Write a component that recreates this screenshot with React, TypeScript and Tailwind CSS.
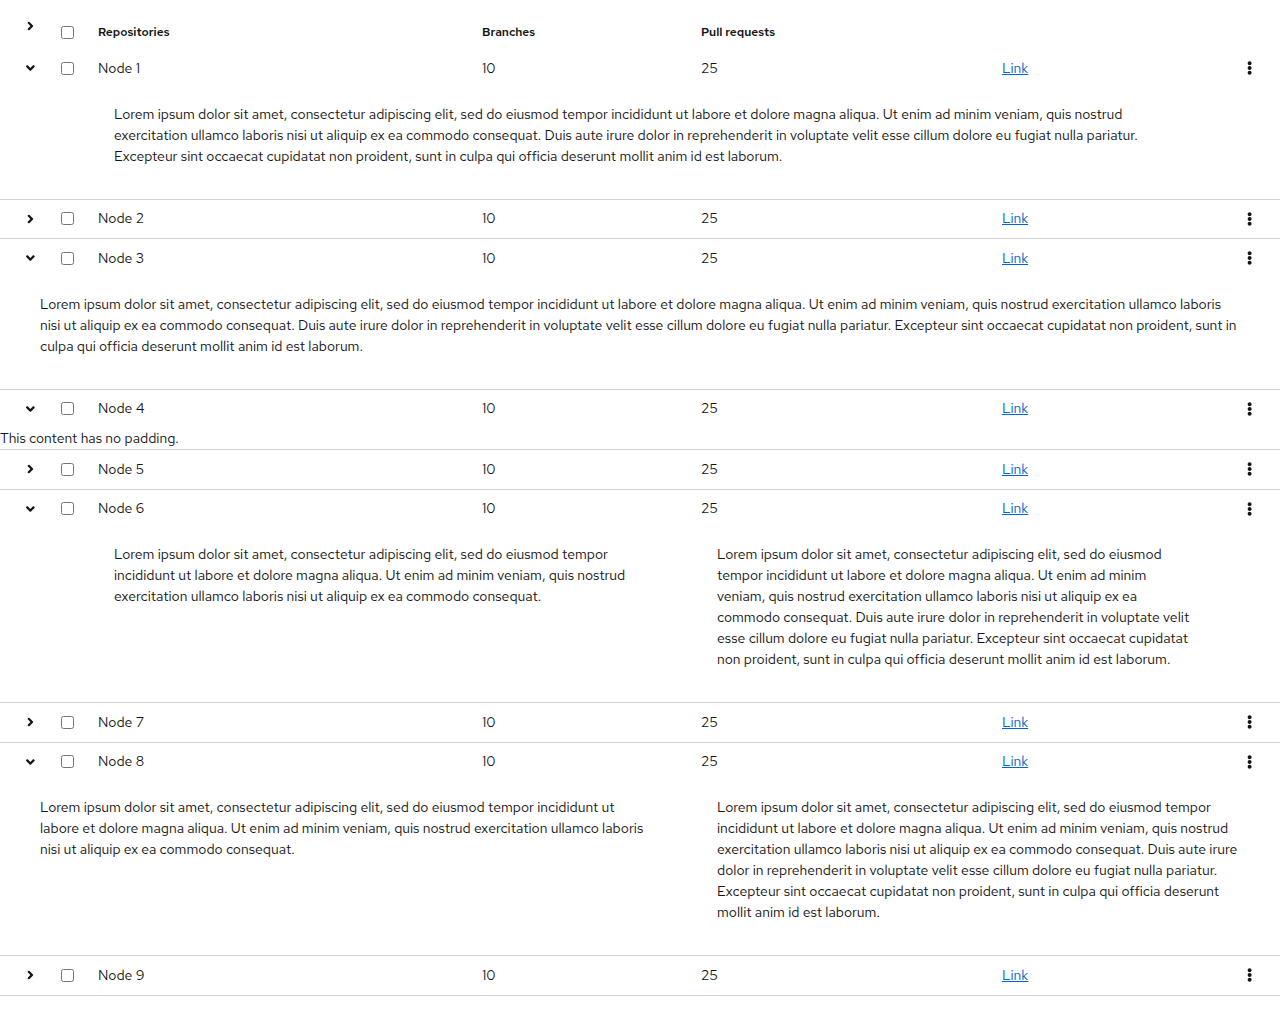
import React from "react";

const LOREM_FULL =
  "Lorem ipsum dolor sit amet, consectetur adipiscing elit, sed do eiusmod tempor incididunt ut labore et dolore magna aliqua. Ut enim ad minim veniam, quis nostrud exercitation ullamco laboris nisi ut aliquip ex ea commodo consequat. Duis aute irure dolor in reprehenderit in voluptate velit esse cillum dolore eu fugiat nulla pariatur. Excepteur sint occaecat cupidatat non proident, sunt in culpa qui officia deserunt mollit anim id est laborum.";
const LOREM_SHORT =
  "Lorem ipsum dolor sit amet, consectetur adipiscing elit, sed do eiusmod tempor incididunt ut labore et dolore magna aliqua. Ut enim ad minim veniam, quis nostrud exercitation ullamco laboris nisi ut aliquip ex ea commodo consequat.";

const GRID = "grid grid-cols-[45px_37px_384px_219px_301px_231px_63px]";

function Chevron({ open }: { open: boolean }) {
  return (
    <svg
      viewBox="0 0 320 512"
      className={`h-[14px] w-[8.75px] fill-[#151515] ${open ? "" : "-rotate-90"}`}
    >
      <path d="M143 352.3L7 216.3c-9.4-9.4-9.4-24.6 0-33.9l22.6-22.6c9.4-9.4 24.6-9.4 33.9 0l96.4 96.4 96.4-96.4c9.4-9.4 24.6-9.4 33.9 0l22.6 22.6c9.4 9.4 9.4 24.6 0 33.9l-136 136c-9.2 9.4-24.4 9.4-33.8 0z" />
    </svg>
  );
}

function Kebab() {
  return (
    <svg viewBox="0 0 192 512" className="h-[14px] w-[5.25px] fill-[#151515]">
      <path d="M96 184c39.8 0 72 32.2 72 72s-32.2 72-72 72-72-32.2-72-72 32.2-72 72-72zM24 80c0 39.8 32.2 72 72 72s72-32.2 72-72S135.8 8 96 8 24 40.2 24 80zm0 352c0 39.8 32.2 72 72 72s72-32.2 72-72-32.2-72-72-72-72 32.2-72 72z" />
    </svg>
  );
}

type Expansion = "indented" | "full" | "nopad" | "split-indented" | "split-full";

interface Row {
  name: string;
  open: boolean;
  expansion?: Expansion;
}

const rows: Row[] = [
  { name: "Node 1", open: true, expansion: "indented" },
  { name: "Node 2", open: false },
  { name: "Node 3", open: true, expansion: "full" },
  { name: "Node 4", open: true, expansion: "nopad" },
  { name: "Node 5", open: false },
  { name: "Node 6", open: true, expansion: "split-indented" },
  { name: "Node 7", open: false },
  { name: "Node 8", open: true, expansion: "split-full" },
  { name: "Node 9", open: false },
];

function ExpandedContent({ kind }: { kind: Expansion }) {
  const text = "text-[14px] leading-[21px]";
  switch (kind) {
    case "indented":
      return (
        <div className={`${GRID} border-b border-[#d2d2d2]`}>
          <div className={`col-start-3 col-span-4 px-[32px] pt-[16px] pb-[32px] ${text}`}>
            {LOREM_FULL}
          </div>
        </div>
      );
    case "full":
      return (
        <div className={`${GRID} border-b border-[#d2d2d2]`}>
          <div className={`col-span-7 px-[40px] pt-[16px] pb-[32px] ${text}`}>{LOREM_FULL}</div>
        </div>
      );
    case "nopad":
      return (
        <div className={`${GRID} border-b border-[#d2d2d2]`}>
          <div className={`col-span-7 ${text}`}>This content has no padding.</div>
        </div>
      );
    case "split-indented":
      return (
        <div className={`${GRID} border-b border-[#d2d2d2]`}>
          <div className={`col-start-3 col-span-2 px-[32px] pt-[16px] pb-[32px] ${text}`}>
            {LOREM_SHORT}
          </div>
          <div className={`col-span-2 pl-[32px] pr-[24px] pt-[16px] pb-[32px] ${text}`}>
            {LOREM_FULL}
          </div>
        </div>
      );
    case "split-full":
      return (
        <div className={`${GRID} border-b border-[#d2d2d2]`}>
          <div className={`col-span-4 pl-[40px] pr-[32px] pt-[16px] pb-[32px] ${text}`}>
            {LOREM_SHORT}
          </div>
          <div className={`col-span-3 pl-[32px] pr-[40px] pt-[16px] pb-[32px] ${text}`}>
            {LOREM_FULL}
          </div>
        </div>
      );
  }
}

function DataRow({ row }: { row: Row }) {
  return (
    <>
      <div
        className={`${GRID} items-center text-[14px] leading-[21px] ${
          row.open ? "h-[38.5px]" : "h-[39.5px] border-b border-[#d2d2d2]"
        }`}
      >
        <div className="flex items-center pl-[26px]">
          <Chevron open={row.open} />
        </div>
        <div className="flex items-center pl-[16px]">
          <input type="checkbox" className="m-0 h-[13px] w-[13px]" />
        </div>
        <div className="pl-[16px]">{row.name}</div>
        <div className="pl-[16px]">10</div>
        <div className="pl-[16px]">25</div>
        <div className="pl-[16px]">
          <a href="#" className="text-[#0066cc] underline">
            Link
          </a>
        </div>
        <div className="flex items-center justify-center pl-[2px]">
          <Kebab />
        </div>
      </div>
      {row.open && row.expansion && <ExpandedContent kind={row.expansion} />}
    </>
  );
}

export default function App() {
  return (
    <div className="min-h-screen bg-white font-['Red_Hat_Text','Liberation_Sans',sans-serif] text-[#151515]">
      <div className={`${GRID} h-[49px] text-[12px] font-semibold leading-[18px]`}>
        <div className="flex pl-[26px] pt-[19px]">
          <Chevron open={false} />
        </div>
        <div className="flex pl-[16px] pt-[26px]">
          <input type="checkbox" className="m-0 h-[13px] w-[13px]" />
        </div>
        <div className="pl-[16px] pt-[23px]">Repositories</div>
        <div className="pl-[16px] pt-[23px]">Branches</div>
        <div className="pl-[16px] pt-[23px]">Pull requests</div>
        <div />
        <div />
      </div>
      {rows.map((row) => (
        <DataRow key={row.name} row={row} />
      ))}
    </div>
  );
}
